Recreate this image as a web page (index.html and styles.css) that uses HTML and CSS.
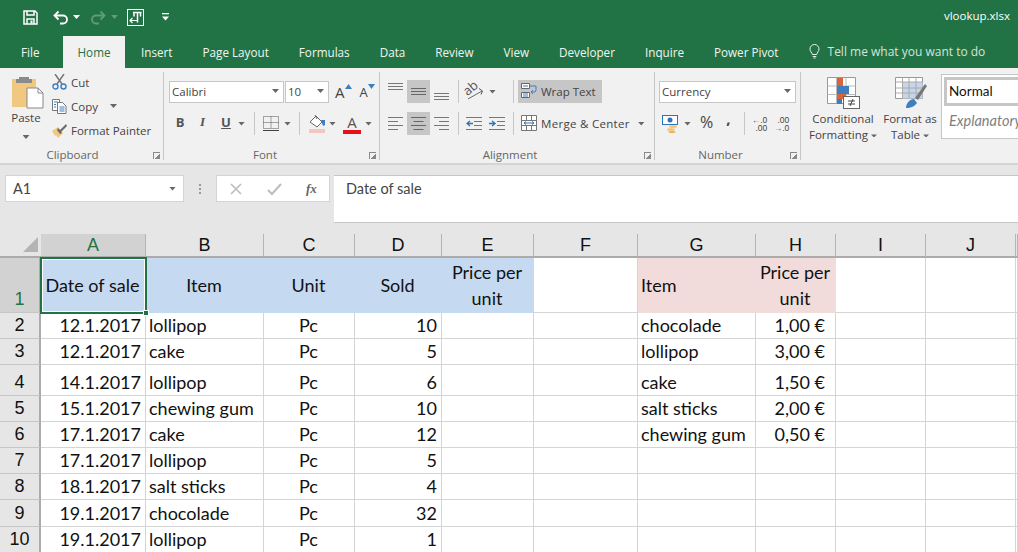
FILE: index.html
```html
<!DOCTYPE html>
<html lang="en">
<head>
<meta charset="utf-8">
<title>vlookup.xlsx</title>
<link rel="stylesheet" href="styles.css">
</head>
<body>
<header class="titlebar">
  <div class="qat">
    <svg class="q-save" width="15" height="15" viewBox="0 0 15 15" fill="none" stroke="#fff" stroke-width="1.5"><path d="M1 1h11l2 2v11H1z"/><path d="M4 1v4h7V1M4 14V9h7v5"/><path d="M8.5 10.5v3" stroke-width="2"/></svg>
    <svg class="q-undo" width="16" height="15" viewBox="0 0 16 15" fill="none" stroke="#fff" stroke-width="1.8"><path d="M5.5 1.5 1.5 5.5l4 4"/><path d="M2 5.5h8a4 4 0 0 1 0 8H7"/></svg>
    <span class="caret white q-c1"></span>
    <svg class="q-redo" width="16" height="15" viewBox="0 0 16 15" fill="none" stroke="#5f9c7c" stroke-width="1.8"><path d="M10.5 1.5l4 4-4 4"/><path d="M14 5.5H6a4 4 0 0 0 0 8h3"/></svg>
    <span class="caret faded q-c2"></span>
    <svg class="q-custom" width="17" height="17" viewBox="0 0 17 17" fill="none" stroke="#fff"><rect x=".5" y=".5" width="16" height="16"/><path d="M6 3.500h8.500M10.500 3.500v10M7 3.500v4M13.500 3.500v4" stroke-width="1.500"/><path d="M3 11.500h7M5.500 9l-2.500 2.500L5.500 14" stroke-width="1.200"/></svg>
    <svg class="q-more" width="7" height="8" viewBox="0 0 7 8" fill="#fff"><rect width="7" height="1.300"/><path d="M0 3.500h7L3.500 7.500z"/></svg>
  </div>
  <div class="doc-title">vlookup.xlsx</div>
</header>
<nav class="tabs">
  <span class="tab t-file">File</span>
  <span class="tab active">Home</span>
  <span class="tab">Insert</span>
  <span class="tab">Page Layout</span>
  <span class="tab">Formulas</span>
  <span class="tab">Data</span>
  <span class="tab">Review</span>
  <span class="tab">View</span>
  <span class="tab">Developer</span>
  <span class="tab">Inquire</span>
  <span class="tab">Power Pivot</span>
  <span class="tell">
    <svg width="11" height="15" viewBox="0 0 11 15" fill="none" stroke="#e8f0eb" stroke-width="1"><path d="M3.300 10.500C3 8.500 1 7.500 1 5a4.500 4.500 0 0 1 9 0c0 2.500-2 3.500-2.300 5.500z"/><path d="M3.700 12.500h3.600M4.500 14h2"/></svg>
    <span>Tell me what you want to do</span>
  </span>
</nav>

<section class="ribbon">
  <div class="group g-clip">
    <div class="body clip-body">
      <div class="paste">
        <svg width="32" height="33" viewBox="0 0 32 33"><path d="M0 3h24v28H0z" fill="#f1c87f"/><path d="M7 1h10v2h3v4H4V3h3z" fill="#8a8a8a"/><path d="M15 12h11l5 5v15H15z" fill="#fff" stroke="#888"/><path d="M26 12v5h5" fill="none" stroke="#888"/></svg>
        <span class="paste-label">Paste</span>
        <span class="caret"></span>
      </div>
      <div class="clip-list">
        <div class="clip-row">
          <svg width="15" height="16" viewBox="0 0 15 16" fill="none"><path d="M3 0l7 10M12 0 5 10" stroke="#777" stroke-width="1.500"/><circle cx="3.500" cy="12.500" r="2.500" stroke="#3f7fc0" stroke-width="1.400"/><circle cx="11.500" cy="12.500" r="2.500" stroke="#3f7fc0" stroke-width="1.400"/></svg>
          <span>Cut</span>
        </div>
        <div class="clip-row">
          <svg width="15" height="16" viewBox="0 0 15 16" fill="#fff" stroke="#777"><path d="M.5 1.500h7v11h-7z"/><path d="M5.500 4.500h5l3.500 3.500v7.500H5.500z"/><path d="M2 4h4M2 6.500h2M2 9h2M7.500 9h5M7.500 11h5M7.500 13h5" stroke="#3f7fc0"/></svg>
          <span>Copy</span><span class="caret copy-caret"></span>
        </div>
        <div class="clip-row">
          <svg width="15" height="15" viewBox="0 0 15 15"><path d="M0 8 6 4l5 6-5 5-2-3-1 1z" fill="#f1c87f"/><path d="M6 5 8 7l6-6 1 2-6 6 1 1-2 1-3-4z" fill="#6a6a6a"/></svg>
          <span>Format Painter</span>
        </div>
      </div>
    </div>
    <div class="glabel"><span></span><span>Clipboard</span><span class="launch"></span></div>
  </div>

  <div class="group g-font">
    <div class="body rows">
      <div class="row">
        <span class="select font-name">Calibri<i class="caret"></i></span>
        <span class="select font-size">10<i class="caret"></i></span>
        <span class="grow m-grow">A<svg width="7" height="5" viewBox="0 0 7 5"><path d="M0 5l3.500-5L7 5z" fill="#3f7fc0"/></svg></span>
        <span class="grow m-shrink">A<svg width="7" height="5" viewBox="0 0 7 5"><path d="M0 0l3.500 5L7 0z" fill="#3f7fc0"/></svg></span>
      </div>
      <div class="row">
        <b class="fmt w22">B</b>
        <i class="fmt w23">I</i>
        <u class="fmt w24">U</u>
        <span class="caret"></span>
        <span class="sep m9"></span>
        <svg class="m8" width="16" height="15" viewBox="0 0 16 15" fill="none" stroke="#555" stroke-dasharray="1 1"><path d="M.5.500h15v12H.5zM8 .5v12M.5 6.500h15"/><path d="M0 14.500h16" stroke="#444" stroke-dasharray="none"/></svg>
        <span class="caret m5"></span>
        <span class="sep m8"></span>
        <svg class="m9" width="17" height="19" viewBox="0 0 17 19"><path d="M1 8l6-6 6 6-5 5z" fill="#fff" stroke="#666"/><path d="M6 1l2 4" stroke="#666"/><path d="M12 6l4 0 0 5-2 1z" fill="#3f7fc0"/><rect y="15" width="16" height="4" fill="#f4c6c0"/></svg>
        <span class="caret m3"></span>
        <span class="color-a m7">A</span>
        <span class="caret m4"></span>
      </div>
    </div>
    <div class="glabel"><span></span><span>Font</span><span class="launch"></span></div>
  </div>

  <div class="group g-align">
    <div class="body rows">
      <div class="row">
        <span class="ab"><svg width="15" height="23" viewBox="0 0 15 23" stroke="#777"><path d="M0 3.500h15M0 6.500h15M0 9.500h15"/></svg></span>
        <span class="ab on"><svg width="15" height="23" viewBox="0 0 15 23" stroke="#666"><path d="M0 8.500h15M0 11.500h15M0 14.500h15"/></svg></span>
        <span class="ab"><svg width="15" height="23" viewBox="0 0 15 23" stroke="#777"><path d="M0 13.500h15M0 16.500h15M0 19.500h15"/></svg></span>
        <span class="sep m5"></span>
        <span class="orient m7"><svg width="18" height="18" viewBox="0 0 18 18" fill="none" stroke="#666"><path d="M2 16 16 8"/><path d="M13 5.500l3.500 2.500-1.500 3.500" stroke="#555"/></svg><em>ab</em></span>
        <span class="caret o-caret"></span>
        <span class="sep m-wrap"></span>
        <span class="wrap m4">
          <svg width="16" height="18" viewBox="0 0 16 18" fill="#fff" stroke="#666"><path d="M.5 1.500h8v5h-8zM.5 10.500h8v5h-8z"/><path d="M2 4h5M2 12h5M2 14h5" stroke="#3f7fc0"/><path d="M9 4h6v4a2 2 0 0 1-2 2H10m2-2-2 2 2 2" fill="none" stroke="#3f7fc0"/></svg>
          <span>Wrap Text</span>
        </span>
      </div>
      <div class="row">
        <span class="ab"><svg width="15" height="13" viewBox="0 0 15 13" stroke="#777"><path d="M0 .5h15M0 4.500h10M0 8.500h15M0 12.500h10"/></svg></span>
        <span class="ab on"><svg width="15" height="13" viewBox="0 0 15 13" stroke="#666"><path d="M0 .5h15M2.500 4.500h10M0 8.500h15M2.500 12.500h10"/></svg></span>
        <span class="ab"><svg width="15" height="13" viewBox="0 0 15 13" stroke="#777"><path d="M0 .5h15M5 4.500h10M0 8.500h15M5 12.500h10"/></svg></span>
        <span class="sep m5"></span>
        <svg class="m7" width="16" height="13" viewBox="0 0 16 13" fill="none" stroke="#777"><path d="M0 .5h16M8 4.500h8M8 8.500h8M0 12.500h16"/><path d="M7 6.500H1m3-2.500-3 2.500L4 9" stroke="#2f75b5" stroke-width="1.400"/></svg>
        <svg class="m6" width="17" height="13" viewBox="0 0 17 13" fill="none" stroke="#777"><path d="M1 .5h16M9 4.500h8M9 8.500h8M1 12.500h16"/><path d="M1 6.500h6M4 4l3 2.500L4 9" stroke="#2f75b5" stroke-width="1.400"/></svg>
        <span class="sep m8"></span>
        <span class="merge m7">
          <svg width="16" height="16" viewBox="0 0 16 16" fill="#fff" stroke="#777"><path d="M.5.500h15v15H.5zM.5 5.500h15M.5 10.500h15M5.500.5v5M10.500.5v5M5.500 10.500v5M10.500 10.500v5"/><path d="M3 8h10M5 6.500 3 8l2 1.500M11 6.500 13 8l-2 1.500" fill="none" stroke="#2f75b5"/></svg>
          <span>Merge &amp; Center</span>
        </span>
        <span class="caret m-mc"></span>
      </div>
    </div>
    <div class="glabel"><span></span><span>Alignment</span><span class="launch"></span></div>
  </div>

  <div class="group g-num">
    <div class="body rows">
      <div class="row"><span class="select num-fmt">Currency<i class="caret"></i></span></div>
      <div class="row">
        <svg class="m3" width="16" height="18" viewBox="0 0 16 18"><rect x=".5" y=".5" width="15" height="9" fill="#fff" stroke="#2f75b5"/><circle cx="8" cy="5" r="2.500" fill="#2f75b5"/><ellipse cx="11" cy="11.500" rx="4" ry="1.500" fill="#f1c87f"/><ellipse cx="9" cy="14.500" rx="4" ry="1.500" fill="#f1c87f"/><ellipse cx="10" cy="17" rx="3.500" ry="1" fill="#e6b35c"/></svg>
        <span class="caret m6"></span>
        <span class="pct">%</span>
        <span class="comma">,</span>
        <span class="sep m-ns"></span>
        <span class="dec m8"><span><i>←</i>.0</span><span>.00</span></span>
        <span class="dec m8"><span>.00</span><span><i>→</i>.0</span></span>
      </div>
    </div>
    <div class="glabel"><span></span><span>Number</span><span class="launch"></span></div>
  </div>

  <div class="group g-styles">
    <div class="big b-cond">
      <svg width="33" height="33" viewBox="0 0 33 33"><path d="M.5 1.500h28v26H.5z" fill="#fff" stroke="#999"/><path d="M.5 10h28M.5 18.500h28M9.500 1.500v26M19 1.500v26" stroke="#bbb"/><rect x="10" y="2" width="6" height="8" fill="#d9643a"/><rect x="10" y="10" width="12" height="8" fill="#3f7fc0"/><rect x="10" y="18" width="9" height="5" fill="#d9643a"/><rect x="10" y="23" width="5" height="5" fill="#3f7fc0"/><rect x="16.500" y="20.500" width="16" height="12" fill="#fff" stroke="#666"/><path d="M21 25h7M21 28h7M26 23l-3 7" fill="none" stroke="#444"/></svg>
      <span>Conditional</span>
      <span>Formatting<i class="caret"></i></span>
    </div>
    <div class="big b-table">
      <svg width="33" height="33" viewBox="0 0 33 33"><path d="M1.500 1.500h27v21h-27z" fill="#fff" stroke="#999"/><path d="M9 6h19.500v16.500H9z" fill="#c5d5ea"/><path d="M1.500 6h27M1.500 12h27M1.500 17h27M8.500 1.500v21M15 1.500v21M22 1.500v21" stroke="#aaa"/><path d="M12 32c0-5 4-9 8-9l3 4c-2 3-6 5-11 5z" fill="#3f7fc0"/><path d="M21 22l10-14 2 2-9 14z" fill="#777"/></svg>
      <span>Format as</span>
      <span>Table<i class="caret"></i></span>
    </div>
    <div class="gallery">
      <div class="st-normal">Normal</div>
      <div class="st-expl">Explanatory...</div>
    </div>
  </div>
</section>

<section class="formula">
  <div class="namebox"><span>A1</span><i class="caret"></i></div>
  <div class="grip"><i></i><i></i><i></i></div>
  <div class="fbtns">
    <svg width="14" height="14" viewBox="0 0 14 14" stroke="#bdbdbd" stroke-width="1.600"><path d="M2 2l10 10M12 2 2 12"/></svg>
    <svg width="15" height="14" viewBox="0 0 15 14" fill="none" stroke="#bdbdbd" stroke-width="2"><path d="M1 8l4 4 9-10"/></svg>
    <em>fx</em>
  </div>
  <div class="fbar">Date of sale</div>
</section>

<section class="sheet">
  <div class="h corner"><svg width="15" height="15" viewBox="0 0 15 15"><path d="M15 0v15H0z" fill="#b4b4b4"/></svg></div>
  <div class="h csel">A</div><div class="h">B</div><div class="h">C</div><div class="h">D</div><div class="h">E</div><div class="h">F</div><div class="h">G</div><div class="h">H</div><div class="h">I</div><div class="h">J</div><div class="h"></div>

  <div class="rh rsel">1</div>
  <div class="c blue m a1">Date of sale<div class="selection"><span class="handle"></span></div></div><div class="c blue m">Item</div><div class="c blue m">Unit</div><div class="c blue m">Sold</div><div class="c blue m">Price per unit</div><div class="c"></div><div class="c pink lt">Item</div><div class="c pink m">Price per unit</div><div class="c"></div><div class="c"></div><div class="c"></div>

  <div class="rh">2</div>
  <div class="c r">12.1.2017</div><div class="c l">lollipop</div><div class="c ct">Pc</div><div class="c r">10</div><div class="c"></div><div class="c"></div><div class="c l">chocolade</div><div class="c acc">1,00 €</div><div class="c"></div><div class="c"></div><div class="c"></div>

  <div class="rh">3</div>
  <div class="c r">12.1.2017</div><div class="c l">cake</div><div class="c ct">Pc</div><div class="c r">5</div><div class="c"></div><div class="c"></div><div class="c l">lollipop</div><div class="c acc">3,00 €</div><div class="c"></div><div class="c"></div><div class="c"></div>

  <div class="rh">4</div>
  <div class="c r">14.1.2017</div><div class="c l">lollipop</div><div class="c ct">Pc</div><div class="c r">6</div><div class="c"></div><div class="c"></div><div class="c l">cake</div><div class="c acc">1,50 €</div><div class="c"></div><div class="c"></div><div class="c"></div>

  <div class="rh">5</div>
  <div class="c r">15.1.2017</div><div class="c l">chewing gum</div><div class="c ct">Pc</div><div class="c r">10</div><div class="c"></div><div class="c"></div><div class="c l">salt sticks</div><div class="c acc">2,00 €</div><div class="c"></div><div class="c"></div><div class="c"></div>

  <div class="rh">6</div>
  <div class="c r">17.1.2017</div><div class="c l">cake</div><div class="c ct">Pc</div><div class="c r">12</div><div class="c"></div><div class="c"></div><div class="c l">chewing gum</div><div class="c acc">0,50 €</div><div class="c"></div><div class="c"></div><div class="c"></div>

  <div class="rh">7</div>
  <div class="c r">17.1.2017</div><div class="c l">lollipop</div><div class="c ct">Pc</div><div class="c r">5</div><div class="c"></div><div class="c"></div><div class="c"></div><div class="c"></div><div class="c"></div><div class="c"></div><div class="c"></div>

  <div class="rh">8</div>
  <div class="c r">18.1.2017</div><div class="c l">salt sticks</div><div class="c ct">Pc</div><div class="c r">4</div><div class="c"></div><div class="c"></div><div class="c"></div><div class="c"></div><div class="c"></div><div class="c"></div><div class="c"></div>

  <div class="rh">9</div>
  <div class="c r">19.1.2017</div><div class="c l">chocolade</div><div class="c ct">Pc</div><div class="c r">32</div><div class="c"></div><div class="c"></div><div class="c"></div><div class="c"></div><div class="c"></div><div class="c"></div><div class="c"></div>

  <div class="rh">10</div>
  <div class="c r">19.1.2017</div><div class="c l">lollipop</div><div class="c ct">Pc</div><div class="c r">1</div><div class="c"></div><div class="c"></div><div class="c"></div><div class="c"></div><div class="c"></div><div class="c"></div><div class="c"></div>
</section>
</body>
</html>
```
FILE: styles.css
```css
* { box-sizing: border-box; }
html, body { margin: 0; height: 552px; overflow: hidden; }
body {
  display: flex;
  flex-direction: column;
  background: #e6e6e6;
  font-family: "Open Sans", "Noto Sans", sans-serif;
  font-size: 11.5px;
  color: #444;
}
i, em { font-style: normal; }

.titlebar {
  height: 36px;
  flex: none;
  background: #217346;
  display: flex;
  justify-content: space-between;
  color: #fff;
}
.qat { display: flex; align-items: center; padding-left: 23px; height: 34px; }
.q-undo { margin-left: 15px; }
.q-c1 { margin-left: 4px; }
.q-redo { margin-left: 10px; }
.q-c2 { margin-left: 5px; }
.q-custom { margin-left: 9px; }
.q-more { margin-left: 18px; }
.doc-title { padding: 8px 8px 0 0; font-size: 11.5px; line-height: 16px; }

.tabs {
  height: 32px;
  flex: none;
  background: #217346;
  color: #f0f5f2;
  display: flex;
  padding-left: 6px;
  font-size: 11.7px;
}
.tab { padding: 8px 15px 0; line-height: 16px; }
.t-file { margin-right: 8.500px; }
.tab.active { background: #f1f1f1; color: #217346; padding: 8px 0 0; width: 62px; margin-right: 1px; text-align: center; }
.tell { display: flex; align-items: center; gap: 8px; margin-left: 15px; padding-bottom: 1px; font-size: 12px; color: #d5e3da; }

.caret {
  display: inline-block;
  flex: none;
  width: 7px;
  height: 4px;
  background: #666;
  clip-path: polygon(0 0, 100% 0, 50% 100%);
}
.caret.white { background: #fff; }
.caret.faded { background: #5f9c7c; }

.ribbon {
  height: 97px;
  flex: none;
  background: #f1f1f1;
  border-bottom: 2px solid #d5d5d5;
  display: flex;
  padding-top: 4px;
  overflow: hidden;
}
.group {
  height: 88px;
  flex: none;
  border-right: 1px solid #c6c6c6;
  display: flex;
  flex-direction: column;
}
.body { flex: 1; min-height: 0; }
.glabel {
  height: 10px;
  flex: none;
  display: grid;
  grid-template-columns: 1fr auto 1fr;
  align-items: center;
  padding-right: 18px;
  font-size: 11.5px;
  line-height: 10px;
  color: #666;
  white-space: nowrap;
}
.launch {
  justify-self: end;
  width: 7px;
  height: 7px;
  margin-right: -15px;
  border: solid #888;
  border-width: 1px 0 0 1px;
  background: linear-gradient(135deg, transparent 55%, #888 55%);
}

.g-clip { width: 164px; }
.clip-body { display: flex; padding-left: 10px; }
.paste { width: 36px; padding-top: 4px; display: flex; flex-direction: column; align-items: center; }
.paste-label { line-height: 16px; margin: 1px 4px 0 0; }
.paste .caret { margin: 9px 4px 0 0; }
.clip-list { margin: -2px 0 0 6px; }
.clip-row { height: 24px; display: flex; align-items: center; gap: 4px; white-space: nowrap; }
.clip-row svg { flex: none; }
.copy-caret { margin-left: 8px; }

.rows { padding-top: 8px; display: flex; flex-direction: column; gap: 9px; }
.row { height: 23px; flex: none; display: flex; align-items: center; white-space: nowrap; }

.g-font { width: 216px; padding-left: 5px; }
.select {
  height: 22px;
  background: #fff;
  border: 1px solid #c6c6c6;
  display: flex;
  align-items: center;
  justify-content: space-between;
  padding: 0 4px 1px 2px;
  flex: none;
}
.font-name { width: 115px; }
.font-size { width: 44px; margin-left: 1px; }
.grow { display: flex; align-items: flex-start; font-size: 15px; line-height: 18px; }
.grow svg { margin-top: 1px; }
.m-grow { margin-left: 6px; }
.m-shrink { margin-left: 8px; font-size: 13px; }
.fmt { text-align: center; font-size: 13px; line-height: 16px; padding-bottom: 3px; color: #555; flex: none; }
.w22 { width: 22px; }
.w23 { width: 23px; font-style: italic; font-family: "Liberation Serif", serif; font-weight: 700; }
.w24 { width: 24px; font-weight: 700; }
.sep { width: 1px; height: 23px; background: #c6c6c6; flex: none; }
.m3 { margin-left: 3px; }
.m4 { margin-left: 4px; }
.m5 { margin-left: 5px; }
.m6 { margin-left: 6px; }
.m7 { margin-left: 7px; }
.m8 { margin-left: 8px; }
.m9 { margin-left: 9px; }
.color-a {
  width: 18px;
  text-align: center;
  font-size: 15px;
  line-height: 16px;
  border-bottom: 4px solid #e8101c;
  color: #555;
  flex: none;
}

.g-align { width: 275px; padding-left: 4px; }
.ab { width: 23px; height: 23px; display: flex; align-items: center; justify-content: center; flex: none; }
.ab.on { background: #c6c6c6; }
.orient { width: 18px; height: 18px; display: grid; flex: none; }
.orient svg, .orient em { grid-area: 1 / 1; }
.orient em { font-size: 13px; line-height: 12px; transform: translate(-2px, -3px) rotate(-40deg); color: #555; }
.o-caret { margin-left: 5px; }
.m-wrap { margin-left: 17px; }
.wrap {
  width: 84px;
  height: 23px;
  background: #c6c6c6;
  display: flex;
  align-items: center;
  gap: 4px;
  padding: 0 0 1px 3px;
  flex: none;
}
.merge { display: flex; align-items: center; gap: 4px; flex: none; padding-bottom: 1px; letter-spacing: .3px; }
.m-mc { margin-left: 8px; }

.g-num { width: 146px; padding-left: 4px; }
.num-fmt { width: 137px; padding-left: 2px; }
.pct { margin-left: 9px; font-size: 16px; line-height: 18px; padding-bottom: 3px; }
.comma { margin-left: 13px; width: 6px; font-size: 15px; font-weight: 700; line-height: 14px; padding-bottom: 12px; }
.m-ns { margin-left: 12px; }
.dec {
  display: flex;
  flex-direction: column;
  align-items: flex-end;
  width: 14px;
  font-family: "Liberation Sans", sans-serif;
  font-size: 8.500px;
  line-height: 8px;
  flex: none;
}
.dec i { color: #2f75b5; font-weight: 700; }

.g-styles { border-right: 0; flex: 1; flex-direction: row; align-items: flex-start; padding-left: 5px; }
.big { display: flex; flex-direction: column; align-items: center; flex: none; line-height: 16px; padding-top: 4px; white-space: nowrap; }
.big svg { margin-bottom: 2px; }
.big .caret { width: 6px; height: 3px; margin-left: 3px; vertical-align: middle; }
.b-cond { width: 74px; }
.b-table { width: 60px; }
.gallery {
  margin: 2px 0 0 1px;
  width: 120px;
  height: 65px;
  flex: none;
  background: #fff;
  border: 1px solid #c6c6c6;
  display: flex;
  flex-direction: column;
  padding: 2px 0 0 2px;
}
.st-normal {
  height: 29px;
  flex: none;
  border: 3px solid #c6c6c6;
  border-right: 0;
  padding-left: 2px;
  line-height: 23px;
  font-family: "Lato", sans-serif;
  font-size: 13.500px;
  color: #111;
}
.st-expl { padding: 6px 0 0 5px; font-family: "Lato", sans-serif; font-style: italic; font-size: 14.500px; color: #7f7f7f; white-space: nowrap; }

.formula {
  height: 69px;
  flex: none;
  padding: 10px 0 0 5px;
  display: flex;
  align-items: flex-start;
  background: #e6e6e6;
}
.namebox {
  width: 179px;
  height: 27px;
  background: #fff;
  border: 1px solid #d4d4d4;
  display: flex;
  align-items: center;
  justify-content: space-between;
  padding: 0 7px;
  font-family: "Lato", sans-serif;
  font-size: 14.500px;
  color: #444;
}
.grip { width: 32px; height: 27px; display: flex; flex-direction: column; align-items: center; justify-content: center; gap: 2px; }
.grip i { width: 2px; height: 2px; background: #999; }
.fbtns {
  width: 114px;
  height: 27px;
  background: #fff;
  border: 1px solid #d4d4d4;
  display: flex;
  align-items: center;
  gap: 24px;
  padding-left: 12px;
}
.fbtns em { font-family: "Liberation Serif", serif; font-style: italic; font-weight: 700; font-size: 13px; color: #666; }
.fbar {
  margin-left: 4px;
  flex: 1;
  height: 48px;
  background: #fff;
  border: solid #c6c6c6;
  border-width: 1px 0;
  padding: 5px 0 0 12px;
  font-family: "Lato", sans-serif;
  font-size: 14.500px;
  line-height: 16px;
  color: #444;
}

.sheet {
  flex: none;
  display: grid;
  grid-template-columns: 41px 105px 118px 91px 87px 92px 104px 118px 80px 90px 90px 2px;
  grid-template-rows: 24px 55px 26px 26px 31px 26px 26px 26px 26px 27px 26px;
  background: #fff;
  font-family: "Lato", sans-serif;
  font-size: 18px;
  color: #111;
}
.h {
  background: #e6e6e6;
  border-bottom: 2px solid #ababab;
  border-right: 1px solid #b4b4b4;
  font-family: "Liberation Sans", sans-serif;
  font-size: 18px;
  line-height: 22px;
  text-align: center;
  color: #111;
}
.corner { display: flex; justify-content: flex-end; align-items: flex-end; padding: 0 3px 4px 0; border-right: 0; }
.csel { background: #d2d2d2; color: #217346; }
.rh {
  background: #e6e6e6;
  border-right: 2px solid #ababab;
  border-bottom: 1px solid #c6c6c6;
  font-family: "Liberation Sans", sans-serif;
  font-size: 18px;
  display: flex;
  align-items: flex-end;
  justify-content: center;
  line-height: 25px;
  color: #111;
}
.rsel { background: #d2d2d2; color: #217346; }
.c {
  border-right: 1px solid #d4d4d4;
  border-bottom: 1px solid #d4d4d4;
  display: flex;
  align-items: flex-end;
  line-height: 25px;
  white-space: nowrap;
  min-width: 0;
}
.r { justify-content: flex-end; padding-right: 4px; }
.l { padding-left: 3px; }
.ct { justify-content: center; padding-right: 1px; }
.acc { justify-content: flex-end; padding-right: 10px; }
.m { align-items: center; justify-content: center; text-align: center; white-space: normal; line-height: 26px; padding: 0 5px 2px 3px; }
.lt { align-items: center; padding-left: 3px; }
.blue { background: #c5d9f1; border-right: 0; border-bottom: 0; }
.pink { background: #f2dcdb; border-right: 0; border-bottom: 0; }
.a1 { position: relative; }
.selection {
  position: absolute;
  inset: -1px;
  border: 2px solid #217346;
  box-shadow: inset 0 0 0 1px #fff;
}
.handle {
  position: absolute;
  right: -4px;
  bottom: -4px;
  width: 6px;
  height: 6px;
  background: #217346;
  border: 1px solid #fff;
}
```
